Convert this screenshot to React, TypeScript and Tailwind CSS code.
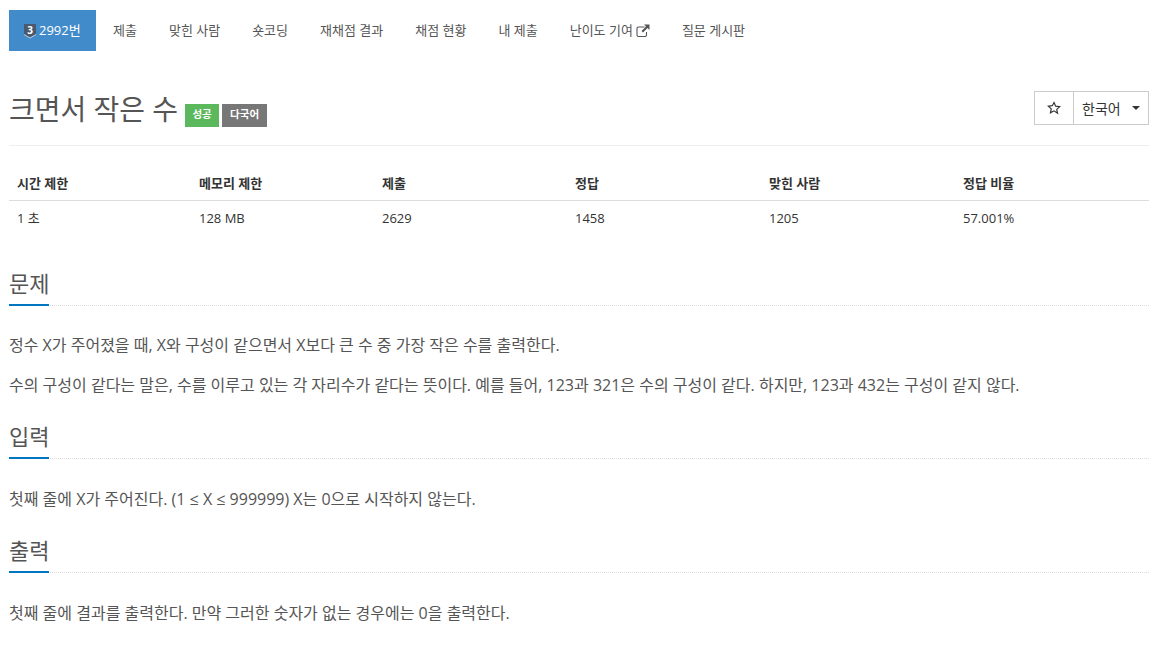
const font = { fontFamily: '"Open Sans", "Noto Sans CJK KR", sans-serif' };

const tabs = ['제출', '맞힌 사람', '숏코딩', '재채점 결과', '채점 현황', '내 제출'];

const stats = [
  { label: '시간 제한', value: '1 초', width: 'w-[182px]' },
  { label: '메모리 제한', value: '128 MB', width: 'w-[183px]' },
  { label: '제출', value: '2629', width: 'w-[193px]' },
  { label: '정답', value: '1458', width: 'w-[194px]' },
  { label: '맞힌 사람', value: '1205', width: 'w-[194px]' },
  { label: '정답 비율', value: '57.001%', width: 'flex-1' },
];

function SectionTitle({ title }: { title: string }) {
  return (
    <div className="relative border-b border-dotted border-[#dddddd] h-[43px]">
      <h2 className="text-[22px] leading-[34px] pt-[3px] text-[#555555]">{title}</h2>
      <div className="absolute left-0 bottom-[-1px] w-10 h-[2px] bg-[#0076c0]" />
    </div>
  );
}

function TierBadge() {
  return (
    <svg width="14" height="16" viewBox="0 0 14 16" className="mr-[2px]">
      <path d="M1 1h12v10.500L7 15 1 11.500z" fill="#4a5a6e" />
      <path d="M1 11.500 7 15l6-3.500" fill="none" stroke="#dfe6ee" strokeWidth="0.8" />
      <text x="7" y="10.500" textAnchor="middle" fontSize="10" fontWeight="700" fill="#ffffff">
        3
      </text>
    </svg>
  );
}

// outlined box with a heavy arrow, like the old font-awesome external-link glyph
function ExternalLink() {
  return (
    <svg width="14" height="13" viewBox="0 0 14 13" className="ml-[3px]">
      <path d="M8.500 3H2.500A1.500 1.500 0 0 0 1 4.500v6.500A1.500 1.500 0 0 0 2.500 12.500h6.500a1.500 1.500 0 0 0 1.500-1.500V8" fill="none" stroke="#555555" strokeWidth="1.100" />
      <path d="M8 0.500h5.500V6L11.500 4 7 8.500 5.500 7 10 2.500z" fill="#555555" />
    </svg>
  );
}

export default function App() {
  return (
    <div className="bg-white min-h-[645px] pl-[9px] pr-[12px] pt-[10px] text-[#333333]" style={font}>
      {/* Tabs */}
      <nav className="flex h-[41px] items-center text-[13px]">
        <div className="flex items-center h-full bg-[#428bca] text-white pl-[14px] w-[87px]">
          <TierBadge />
          2992번
        </div>
        <div className="flex ml-[1px] text-[#555555]">
          {tabs.map((tab) => (
            <span key={tab} className="px-[16px] whitespace-nowrap">
              {tab}
            </span>
          ))}
          <span className="px-[16px] whitespace-nowrap flex items-center">
            난이도 기여
            <ExternalLink />
          </span>
          <span className="px-[16px] whitespace-nowrap">질문 게시판</span>
        </div>
      </nav>

      {/* Title */}
      <div className="flex items-start justify-between mt-[40px] h-[55px] border-b border-[#eeeeee]">
        <div className="flex items-center h-[36px]">
          <h1 className="text-[28px] leading-[36px] text-[#555555]">크면서 작은 수</h1>
          <span className="ml-[7px] mt-[12px] h-[23px] w-[34px] flex items-center justify-center bg-[#5cb85c] text-white text-[10.500px] font-bold">
            성공
          </span>
          <span className="ml-[3px] mt-[12px] h-[23px] w-[45px] flex items-center justify-center bg-[#777777] text-white text-[10.500px] font-bold">
            다국어
          </span>
        </div>
        <div className="flex h-[34px] border border-[#cccccc] text-[14px]">
          <span className="w-[39px] flex items-center justify-center border-r border-[#cccccc]">
            <svg width="14" height="14" viewBox="0 0 24 24" fill="none" stroke="#333333" strokeWidth="2">
              <path d="M12 2.500l2.900 6.300 6.900.8-5.100 4.700 1.400 6.800L12 16.900l-6.100 3.400 1.400-6.800-5.100-4.700 6.900-.8z" />
            </svg>
          </span>
          <span className="w-[74px] flex items-center pl-[8px]">
            한국어
            <span className="ml-[11px] border-x-[4px] border-x-transparent border-t-[4px] border-t-[#333333]" />
          </span>
        </div>
      </div>

      {/* Stats table */}
      <div className="mt-[20px] text-[13px]">
        <div className="flex h-[35px] pt-[2px] items-center border-b border-[#dddddd] font-bold">
          {stats.map((s) => (
            <div key={s.label} className={`${s.width} px-2`}>
              {s.label}
            </div>
          ))}
        </div>
        <div className="flex h-[36px] items-center">
          {stats.map((s) => (
            <div key={s.label} className={`${s.width} px-2`}>
              {s.value}
            </div>
          ))}
        </div>
      </div>

      {/* Problem body */}
      <section className="mt-[26px] text-[16px] text-[#555555]">
        <SectionTitle title="문제" />
        <p className="mt-[28px] leading-[22px]">
          정수 X가 주어졌을 때, X와 구성이 같으면서 X보다 큰 수 중 가장 작은 수를 출력한다.
        </p>
        <p className="mt-[18px] leading-[22px]">
          수의 구성이 같다는 말은, 수를 이루고 있는 각 자리수가 같다는 뜻이다. 예를 들어, 123과 321은 수의 구성이 같다. 하지만, 123과 432는 구성이 같지 않다.
        </p>
      </section>

      <section className="mt-[20px] text-[16px] text-[#555555]">
        <SectionTitle title="입력" />
        <p className="mt-[29px] leading-[22px]">첫째 줄에 X가 주어진다. (1 ≤ X ≤ 999999) X는 0으로 시작하지 않는다.</p>
      </section>

      <section className="mt-[20px] text-[16px] text-[#555555]">
        <SectionTitle title="출력" />
        <p className="mt-[29px] leading-[22px]">첫째 줄에 결과를 출력한다. 만약 그러한 숫자가 없는 경우에는 0을 출력한다.</p>
      </section>
    </div>
  );
}
